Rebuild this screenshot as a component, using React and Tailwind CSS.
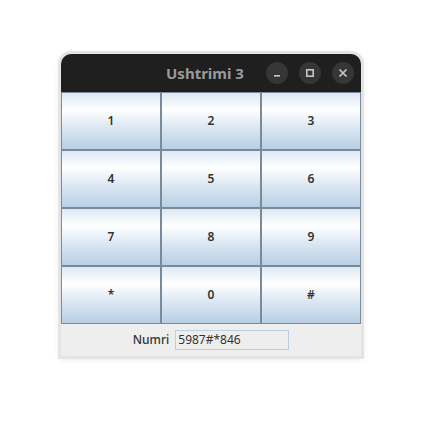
import React from 'react';

const keys = ['1', '2', '3', '4', '5', '6', '7', '8', '9', '*', '0', '#'];

const App = () => {
    return (
        <div className="w-[422px] h-[422px] bg-white pt-[54px] pl-[61px]" style={{ fontFamily: '"Noto Sans", "DejaVu Sans", sans-serif' }}>
            <div className="w-[300px] rounded-t-[10px] shadow-[0_0_0_3px_#e4e4e4,0_2px_8px_rgba(0,0,0,0.12)] bg-[#eeeeee]">
                {/* Title bar */}
                <div className="h-[38px] bg-[#1f1f1f] rounded-t-[10px] flex items-center pl-[83px] pr-[7px]">
                    <div className="flex-1 text-center text-[15px] font-bold text-[#9a9a9a] leading-none">Ushtrimi 3</div>
                    <div className="flex items-center gap-[11px]">
                        <div className="w-[22px] h-[22px] rounded-full bg-[#363636] flex items-center justify-center">
                            <svg width="10" height="10" viewBox="0 0 10 10">
                                <rect x="2" y="7" width="6" height="1.6" fill="#c8c8c8" />
                            </svg>
                        </div>
                        <div className="w-[22px] h-[22px] rounded-full bg-[#363636] flex items-center justify-center">
                            <svg width="10" height="10" viewBox="0 0 10 10">
                                <rect x="1.8" y="1.8" width="6.4" height="6.4" fill="none" stroke="#c8c8c8" strokeWidth="1.6" />
                            </svg>
                        </div>
                        <div className="w-[22px] h-[22px] rounded-full bg-[#363636] flex items-center justify-center">
                            <svg width="10" height="10" viewBox="0 0 10 10">
                                <path d="M1.5 1.5 L8.5 8.5 M8.5 1.5 L1.5 8.5" stroke="#c8c8c8" strokeWidth="1.7" />
                            </svg>
                        </div>
                    </div>
                </div>

                {/* Keypad */}
                <div className="grid grid-cols-[100px_100px_100px] grid-rows-[58px_58px_58px_58px]">
                    {keys.map((k) => (
                        <button
                            key={k}
                            className="border border-[#7a8a99] bg-[linear-gradient(to_bottom,#dde8f3_0%,#ffffff_30%,#dde8f3_60%,#b8cfe5_100%)] text-[12px] font-semibold text-[#333333] flex items-center justify-center"
                        >
                            {k}
                        </button>
                    ))}
                </div>

                {/* Bottom panel */}
                <div className="h-[32px] flex items-center justify-center gap-[6px] pb-[1px]">
                    <span className="text-[12px] font-medium text-[#333333]">Numri</span>
                    <div className="w-[114px] h-[20px] border border-[#b8cfe5] bg-[#eeeeee] flex items-center px-[2px] text-[12px] text-[#333333]">
                        5987#*846
                    </div>
                </div>
            </div>
        </div>
    );
};

export default App;
